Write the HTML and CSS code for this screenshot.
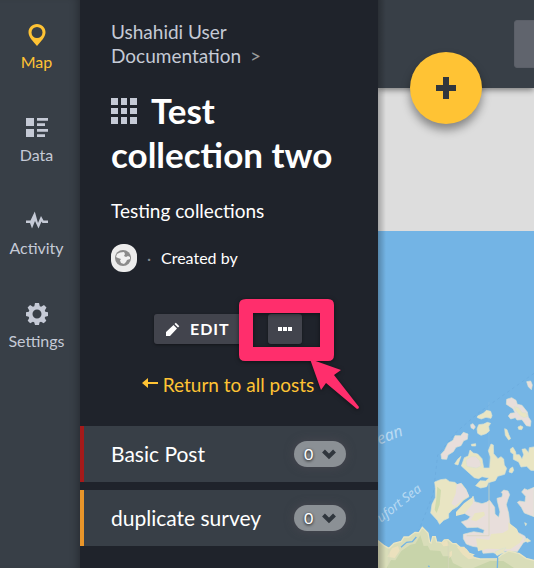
FILE: index.html
```
<!DOCTYPE html>
<html lang="en">
<head>
<meta charset="utf-8">
<title>Test collection two</title>
<link rel="stylesheet" href="styles.css">
</head>
<body>
<div class="app">
  <nav class="nav">
    <a class="nav-item active" href="#map">
      <svg viewBox="0 0 24 24"><path fill-rule="evenodd" d="M12 2C7 2 3.500 5.700 3.500 10.300c0 5 4.500 9 8.500 13.700 4-4.700 8.500-8.700 8.500-13.700C20.500 5.700 17 2 12 2zm0 3a5.500 5.500 0 1 1 0 11 5.500 5.500 0 0 1 0-11z"/></svg>
      <span>Map</span>
    </a>
    <a class="nav-item" href="#data">
      <svg viewBox="0 0 24 24"><path d="M1 3h8v8H1zM1 14h8v8H1zM12 3h11v2.700H12zM12 8.300h8V11h-8zM12 14h11v2.700H12zM12 19.300h8V22h-8z"/></svg>
      <span>Data</span>
    </a>
    <a class="nav-item" href="#activity">
      <svg viewBox="0 0 24 24"><path d="M1 12.500h4.500L9.800 3.500l3.200 11.500 3-7 2.500 4.500H23V15h-5.500l-1-1.500L13.500 20.500 10 13l-3 7.500L5 15H1z"/></svg>
      <span>Activity</span>
    </a>
    <a class="nav-item" href="#settings">
      <svg viewBox="0 -1 24 24"><path fill-rule="evenodd" d="M10 1h4l.8 3.200 1.300.5L19 3l2.500 2.500-1.700 2.900.5 1.300L23 10.300v3.800l-2.800.7-.5 1.300 1.600 2.700-2.600 2.500-2.700-1.600-1.400.5L14 23h-4l-.8-2.800-1.300-.5-2.700 1.600-2.500-2.500 1.500-2.700-.5-1.300-2.700-.7v-3.800l2.800-.6.5-1.300L2.600 5.500 5.100 3l2.800 1.700 1.400-.5zM12 7.500a4.500 4.500 0 1 0 0 9 4.500 4.500 0 0 0 0-9z"/></svg>
      <span>Settings</span>
    </a>
  </nav>

  <aside class="panel">
    <header class="intro">
      <p class="crumbs"><a href="#home">Ushahidi User Documentation</a> <span class="sep">&gt;</span></p>
      <h1><svg class="grid-icon" viewBox="0 0 26 26"><path d="M0 0h7v7H0zM10 0h6v7h-6zM19 0h7v7h-7zM0 10h7v6H0zM10 10h6v6h-6zM19 10h7v6h-7zM0 19h7v7H0zM10 19h6v7h-6zM19 19h7v7h-7z"/></svg>Test collection two</h1>
      <p class="about">Testing collections</p>
      <div class="author">
        <svg class="avatar" viewBox="0 0 26 28"><rect width="26" height="28" rx="12" fill="#ececec"/><circle cx="12" cy="14" r="8" fill="#8b8b8b"/><path fill="#f0f0f0" d="M9 8.500l4-.5 1 2-1 2 2 1 2-1 2 1v2l-3 1-1 2-2 2-3-1-1-2.500 1-1.500-3-1-2-1 1-3z"/></svg>
        <span class="dot">·</span>
        <span>Created by</span>
      </div>
      <div class="actions">
        <button class="btn edit" type="button"><svg class="pencil" viewBox="0 0 14 14"><path d="M0 14v-4L7.500 3l3.500 3.500L4 14zM8.500 2l1.300-1.300 3.500 3.500L12 5.500z"/></svg>EDIT</button>
        <button class="btn more" type="button" aria-label="More"><svg class="dots" viewBox="0 0 14 4"><path d="M0 0h4v4H0zM5 0h4v4H5zM10 0h4v4h-4z"/></svg>
        <svg class="callout" viewBox="0 0 122 114"><path fill-rule="evenodd" d="M7 0h82q6 0 6 6v50q0 6-6 6H6q-6 0-6-6V6q0-6 7-6zM14 14v34h67V14z"/><path d="M71 60l31 11-7 5 25 32q0 2-2 2L87 84l-5 7z"/></svg></button>
      </div>
      <a class="back" href="#posts"><svg viewBox="0 0 16 10"><path d="M0 5l6-5v4h10v2H6v4z"/></svg>Return to all posts</a>
    </header>
    <ul class="surveys">
      <li class="survey red"><span>Basic Post</span><button class="count" type="button">0<svg viewBox="0 0 14 10"><path d="M1.500 2L7 7.500l5.500-5.500"/></svg></button></li>
      <li class="survey orange"><span>duplicate survey</span><button class="count" type="button">0<svg viewBox="0 0 14 10"><path d="M1.500 2L7 7.500l5.500-5.500"/></svg></button></li>
    </ul>
  </aside>

  <main class="main">
    <div class="toolbar">
      <input class="search" type="search" aria-label="Search">
      <button class="add" type="button" aria-label="Add post"><svg viewBox="0 0 20 22"><path d="M7 0h6v8h7v6h-7v8H7v-8H0V8h7z"/></svg></button>
    </div>
    <svg class="map" viewBox="24 -387 468 1011" preserveAspectRatio="xMinYMin slice">
      <rect x="24" y="-387" width="2000" height="2000" fill="#73b4e5"/>
      <g fill="none" stroke="#69a9dc" stroke-width="2" stroke-dasharray="9 9"><path d="M492 40L330 155L260 215L203 285L190 400L145 515"/><path d="M357 125v400h-60" stroke="#82bbe5" stroke-dasharray="none"/></g>
      <g fill="#e9e5c3" stroke="#d9e2d2" stroke-width="2" stroke-linejoin="round">
        <path fill="#e8dedb" d="M470 65l12 -2 5 12 -3 14 -9 -9z"/>
        <path fill="#e8dedb" d="M410 118l15 -5 13 8 4 12 14 3 16 20 3 15 8 12 -2 16 -12 -2 -13 -18 -15 1 -5 -7 -14 4 -7 -9 6 -8 14 -2 -6 -12 -20 -13z"/>
        <path d="M433 140l12 3 12 15 11 0 4 12 -10 3 -13 -7 -12 -15z"/>
        <path d="M323 168l18 -9 8 -8 13 3 4 13 -3 8 -15 -3 -14 5 -12 -4z"/>
        <path d="M321 207l5 -13 15 -2 11 -5 10 3 -6 9 2 14 -10 8 -15 5 -10 -6z"/>
        <path fill="#e8dedb" d="M302 194l7 -3 7 10 -5 7 -8 -5z"/>
        <path d="M404 206l7 3 5 14 6 13 -6 4 -10 -14z"/><path d="M444 201l8 -4 7 4 -4 8 -9 -1z"/><path d="M304 253l13 -2 0 7 -12 0z"/>
        <path fill="#e8dedb" d="M213 283l10 -11 11 -22 15 -9 6 -14 17 0 8 -10 14 5 -2 16 -11 4 -8 15 -15 5 -8 13 -16 10 -4 13 -15 -1z"/>
        <path d="M254 312l9 -14 10 -9 -5 14 -4 12zM274 318l9 -25 12 -5 5 -18 10 9 13 3 13 14 5 28 18 0 2 -33 -6 -19 8 -20 7 3 1 26 13 15 9 -6 8 7 2 18 7 10 -6 18 -21 6 -7 13 -21 6 -5 12 -18 4 -15 -7 13 -15 17 1 10 -9 -21 -4 -10 6 -13 -3z"/>
        <path fill="#e8dedb" d="M288 300l15 -10 14 0 12 12 5 15 -15 7 -28 -5z"/>
        <path d="M421 267l8 -5 8 14 1 8 10 0 8 13 5 -13 -5 -16 10 -2 10 12 2 -15 18 -3v72l-14 -1 -12 -12 -17 2 -7 -15 -16 -8 0 -16 -8 -5zM420 326l8 -5 3 10 -5 8 -9 -3z"/>
        <path d="M194 366l17 -7 17 -2 11 8 16 2 7 7 12 -4 14 18 9 22 -17 11 -16 18 -17 10 -11 12 0 13 -15 7 -12 12 -7 -12 -20 -22 4 -26 10 -20 0 -28z"/>
        <path fill="#e8dedb" d="M260 373l12 -3 16 20 9 17 -22 14 -20 18 -11 -8 13 -30z" stroke="none"/>
        <path fill="#cfdbad" d="M202 380l11 10 -4 44 -9 25 -6 -10 5 -32z" stroke="none"/>
        <path fill="#e8dedb" d="M309 408l5 17 22 6 13 -4 10 -6 15 21 1 20 11 10 4 -16 -8 -33 -1 -8 15 -4 2 -9 -4 -5 7 -7 13 3 5 11 -6 16 -4 14 7 26 4 36 16 9 9 13 19 10 8 14 -12 6 -18 27 -38 -1 -20 9 -15 -5 -30 2 -5 -17 -27 -4 -18 -7 -9 -16 0 -13 31 -8 29 5 3 -10 -20 -8 -32 1 -17 -17 19 -7 8 -9 -21 -12 0 -12 27 -28z"/>
        <path stroke="none" d="M309 410l0 20 -27 32 -24 6 0 -12 24 -26zM314 460l28 -5 3 11 -27 18 -15 -4zM318 535l40 5 5 -18 35 -3 17 -10 0 -22 26 20 5 15 14 11 -10 15 -29 20 -70 -2 -27 8z"/>
        <path fill="#e8dedb" d="M492 382l-19 8 -10 -4 -8 10 12 13 -2 17 -16 -3 -7 4 12 15 9 17 29 11z"/>
        <path d="M375 575l13 -6 20 -6 -7 10 8 9 -13 -2 -17 8z"/><path d="M462 540l10 -5 10 8 -10 4zM464 488l6 3 -3 6z"/>
      </g>
      <path fill="#d9ddb9" stroke="#e9e5c3" stroke-width="4" d="M24 542l17 14 16 9 15 -15 22 -6 8 -13 14 0 19 -14 12 1 10 -16 17 17 5 28 4 2 5 -19 8 0 4 16 16 2 7 -8 11 -1 14 12 10 0 12 11 18 6 10 12 12 4 -9 6 29 7 51 -1 13 -11 23 -12 31 8 20 14 44 12v50H24z"/>
      <path fill="#c8d4aa" d="M50 624l13 -24 13 1 18 -28 27 -19 15 -3 15 -25 10 32 12 -1 7 14 31 2 8 16 22 0 8 20 30 15zM310 624l50 -21 40 0 32 21z"/>
      <path fill="#ebe1bd" d="M52 590l14 -25 18 -7 5 14 -15 22zM212 547l19 -5 7 15 -18 2zM239 576l7 -4 0 14 -8 9zM260 560l23 0 18 24 18 9 -23 5 -19 -15z"/>
      <path fill="none" stroke="#73b4e5" stroke-width="4" d="M93 562l17 -15 17 -2 12 -14M382 624l1 -31 -8 -9M174 618l5 2"/>
      <path fill="none" stroke="#d5d5bb" stroke-width="2" d="M357 370v157H290M235 545v79M57 565v59"/>
      <g class="sea-names"><text class="ocean" transform="translate(28 254) rotate(-21)">ean</text><text transform="translate(33 488) rotate(-38)">ufort Sea</text></g>
    </svg>
  </main>
</div>
</body>
</html>
```
FILE: styles.css
```
* { box-sizing: border-box; }

body {
  margin: 0;
  font-family: Lato, "Open Sans", sans-serif;
  font-size: 19px;
  line-height: 24px;
  color: #fff;
  background: #1f232b;
}

h1, p, ul { margin: 0; padding: 0; }
a { color: inherit; text-decoration: none; }
button { font: inherit; color: inherit; border: 0; cursor: pointer; }
svg { fill: currentColor; }

.app { display: flex; height: 100vh; min-height: 560px; }

.nav {
  flex: 0 0 80px;
  padding: 22px 7px 0 0;
  background: #383f47;
  box-shadow: inset -8px 0 8px -6px rgba(0, 0, 0, .3);
  color: #c5cad6;
  font-size: 16px;
}
.nav-item {
  display: flex;
  flex-direction: column;
  align-items: center;
  gap: 4px;
  height: 93px;
}
.nav-item.active { color: #ffc334; }
.nav-item svg { width: 24px; height: 24px; }

.panel { flex: 0 0 298px; overflow: hidden; background: #1f232b; }
.intro { padding: 20px 33px 0 31px; }
.crumbs { color: #c5cad6; }
.sep { margin-left: 4px; color: #999; }

h1 { margin-top: 20px; font-size: 35px; line-height: 44px; font-weight: 700; }
.grid-icon { width: 26px; height: 26px; margin-right: 14px; color: #c5cad6; }

.about { margin-top: 23px; }
.author {
  display: flex;
  align-items: center;
  height: 28px;
  margin-top: 21px;
  font-size: 16px;
}
.avatar { width: 26px; height: 28px; }
.dot { width: 24px; text-align: center; color: #858a91; }

.actions {
  display: flex;
  justify-content: center;
  gap: 20px;
  margin-top: 42px;
}
.btn {
  position: relative;
  display: flex;
  align-items: center;
  height: 30px;
  padding: 0 12px;
  border-radius: 3px;
  background: #42444d;
  box-shadow: 0 1px 3px rgba(0, 0, 0, .4);
  font-size: 16px;
  font-weight: 700;
  letter-spacing: 1px;
}
.edit { min-width: 94px; }
.more { padding: 0 10px; }
.pencil { width: 14px; height: 14px; margin-right: 10px; }
.dots { width: 14px; height: 4px; }
.callout {
  position: absolute;
  left: -29px;
  top: -15px;
  z-index: 2;
  width: 122px;
  height: 114px;
  color: #ff2e6c;
  filter: drop-shadow(0 1px 2px rgba(0, 0, 0, .5));
  pointer-events: none;
}

.back {
  display: flex;
  align-items: center;
  justify-content: center;
  gap: 5px;
  margin-top: 29px;
  color: #ffc334;
}
.back svg { width: 16px; height: 10px; margin-bottom: 4px; }

.surveys { display: grid; gap: 8px; margin-top: 29px; list-style: none; }
.survey {
  display: flex;
  align-items: center;
  justify-content: space-between;
  height: 56px;
  padding: 0 32px 0 27px;
  border-left: 4px solid;
  background: #383f47;
  font-size: 21px;
}
.survey span { color: #fff; }
.red { border-color: #a51a1a; }
.orange { border-color: #e8952a; }
.count {
  display: flex;
  align-items: center;
  justify-content: space-between;
  width: 52px;
  height: 26px;
  padding: 0 10px;
  border-radius: 13px;
  background: #8b9095;
  box-shadow: 0 0 10px rgba(90, 80, 90, .5);
  font-size: 16px;
  text-shadow: 0 1px 3px #000;
}
.count svg { width: 14px; height: 10px; overflow: visible; fill: none; stroke: #30363d; stroke-width: 4; }

.main {
  position: relative;
  display: flex;
  flex: 1;
  flex-direction: column;
  min-width: 0;
  overflow: hidden;
  background: #ddd;
}
.main::after {
  content: "";
  position: absolute;
  inset: 0 auto 0 0;
  width: 8px;
  background: linear-gradient(90deg, rgba(0, 0, 0, .25), transparent);
}
.toolbar {
  position: relative;
  flex: 0 0 88px;
  padding: 20px 0 0 136px;
  background: #383f47;
  box-shadow: 0 2px 6px rgba(0, 0, 0, .45);
}
.search {
  width: 320px;
  height: 48px;
  border: 1px solid #5b5f68;
  border-radius: 3px;
  background: #60646d;
}
.add {
  position: absolute;
  left: 32px;
  bottom: -36px;
  display: grid;
  place-items: center;
  width: 72px;
  height: 72px;
  padding: 0;
  border-radius: 50%;
  background: #ffc334;
  box-shadow: 0 6px 10px rgba(0, 0, 0, .4);
  color: #30363d;
}
.add svg { width: 20px; height: 22px; }

.map { flex: 1; width: 100%; min-height: 0; margin-top: 143px; }
.sea-names {
  fill: #b9daf2;
  font-family: "Noto Sans", sans-serif;
  font-size: 39px;
  font-style: italic;
}
.ocean { font-size: 48px; }
```
